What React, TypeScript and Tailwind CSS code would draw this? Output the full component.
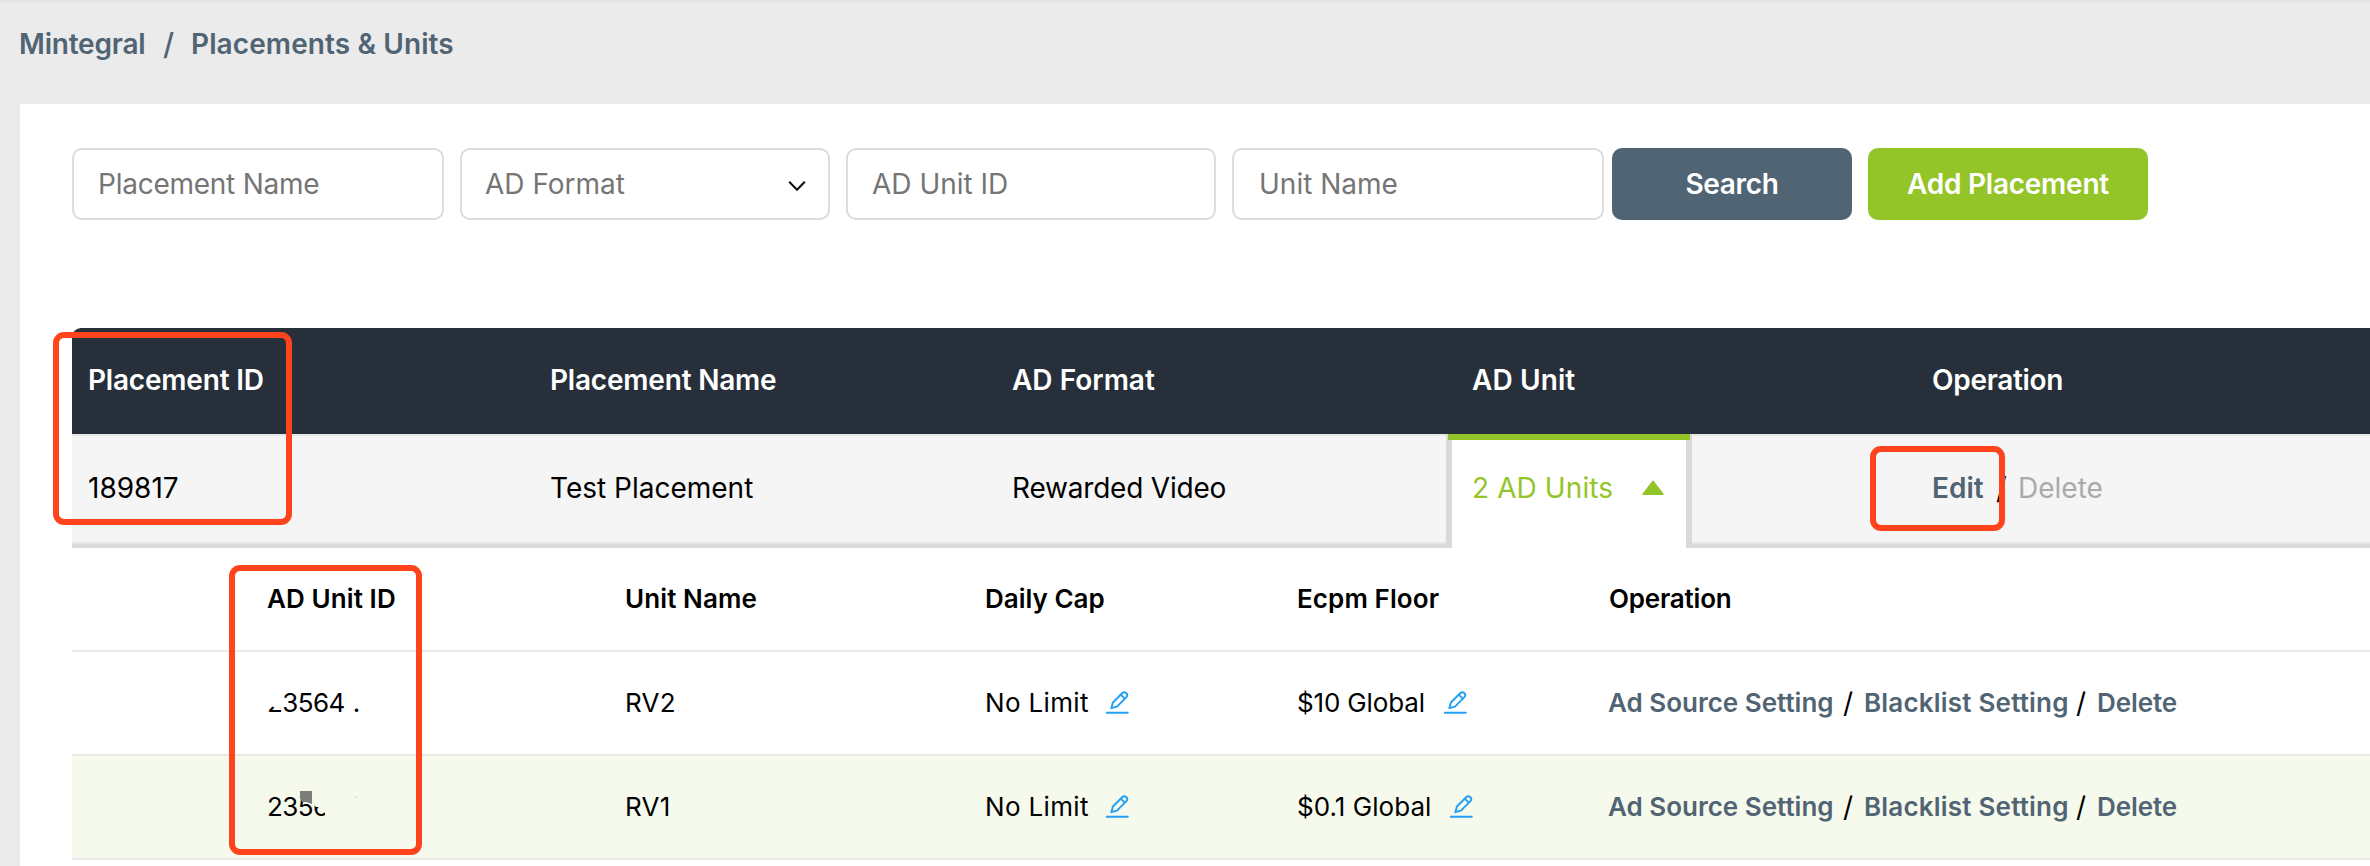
import type { ReactNode } from 'react';

function Field({ children, className }: { children: ReactNode; className: string }) {
  return (
    <div className={`flex h-[72px] shrink-0 items-center justify-between rounded-[10px] border-2 border-[#dcdcdc] bg-white text-[#757575] ${className}`}>
      {children}
    </div>
  );
}

function Pencil() {
  return (
    <svg className="h-[24px] w-[24px] shrink-0" viewBox="0 0 24 24" fill="none" stroke="#22a0f5" strokeWidth="1.9" strokeLinejoin="round" strokeLinecap="round">
      <path d="M5.3 17.2 L6.9 11.5 L16.4 2 C18.9 -.3 22.7 3.1 20.6 5.8 L11 15.6 Z" />
      <path d="M14.8 3.8 L18.9 7.6" />
      <path d="M.7 21.8 H21.7" strokeWidth="2" />
    </svg>
  );
}

function Operations() {
  return (
    <div className="flex items-center text-[#516474]">
      <span className="w-[235px] font-semibold">Ad Source Setting</span>
      <span className="w-[21px] text-[28px] text-black">/</span>
      <span className="w-[212px] font-semibold tracking-[0.2px]">Blacklist Setting</span>
      <span className="w-[21px] text-[28px] text-black">/</span>
      <span className="font-semibold -tracking-[0.1px]">Delete</span>
    </div>
  );
}

function UnitRow({ id, name, floor, className }: { id: ReactNode; name: string; floor: ReactNode; className: string }) {
  return (
    <div className={`grid h-[104px] shrink-0 grid-cols-[358px_360px_312px_311px_1fr] items-center border-b-2 border-[#e8e8e8] pl-[195px] text-[26px] ${className}`}>
      <div>{id}</div>
      <div className="tracking-[0.2px]">{name}</div>
      <div className="flex items-center gap-[17px]">
        <span className="tracking-[0.35px]">No Limit</span>
        <Pencil />
      </div>
      <div className="flex items-center gap-[19px]">{floor}<Pencil /></div>
      <Operations />
    </div>
  );
}

export default function App() {
  return (
    <div className="relative flex h-[866px] w-full flex-col overflow-hidden bg-[#ebebeb] font-[Inter,'Liberation_Sans',sans-serif] text-[28px] leading-9 whitespace-nowrap text-black">
      <div className="h-[5px] shrink-0 bg-linear-to-b from-[#e2e2e2] to-[#ebebeb]" />
      <nav className="flex h-[99px] shrink-0 pt-[21px] pl-[19px] font-semibold text-[#516474]">
        <span className="w-[144px] -tracking-[0.2px]">Mintegral</span>
        <span className="w-[28px] text-[30px] font-medium">/</span>
        <span className="tracking-[0.1px]">Placements &amp; Units</span>
      </nav>

      <main className="ml-5 flex grow flex-col bg-white pt-11 pl-[52px]">
        <div className="flex h-[72px] shrink-0">
          <Field className="mr-4 w-[372px] pl-6 -tracking-[0.25px]">Placement Name</Field>
          <Field className="mr-4 w-[370px] pr-[22px] pl-[23px]">
            <span>AD Format</span>
            <svg className="mt-1 h-3 w-[18px]" viewBox="0 0 18 12" fill="none" stroke="#111" strokeWidth="2">
              <path d="M1.2 1.8 L9 9.8 L16.8 1.8" />
            </svg>
          </Field>
          <Field className="mr-4 w-[370px] pl-6">AD Unit ID</Field>
          <Field className="mr-2 w-[372px] pl-[25px]">Unit Name</Field>
          <button className="mr-4 w-[240px] rounded-[10px] bg-[#516474] font-semibold -tracking-[0.35px] text-white">Search</button>
          <button className="w-[280px] rounded-[10px] bg-[#94c528] font-semibold -tracking-[0.25px] text-white">Add Placement</button>
        </div>

        <section className="mt-[108px] flex flex-col">
          <div className="grid h-[106px] grid-cols-[462px_462px_460px_460px_1fr] items-center rounded-tl-[9px] bg-[#27303a] pb-[2px] pl-4 font-semibold text-white">
            <div className="-tracking-[0.2px]">Placement ID</div>
            <div className="-tracking-[0.2px]">Placement Name</div>
            <div>AD Format</div>
            <div className="tracking-[0.1px]">AD Unit</div>
            <div className="-tracking-[0.3px]">Operation</div>
          </div>
          <div className="relative h-[114px] border-t-2 border-b-4 border-t-[#e8e8e8] border-b-[#d9d9d9] bg-[#f5f5f5]">
            <div className="grid h-[108px] grid-cols-[462px_462px_460px_460px_1fr] items-center border-b-2 border-[#e6e6e6] pb-[2px] pl-4">
              <div>189817</div>
              <div>Test Placement</div>
              <div className="-tracking-[0.2px]">Rewarded Video</div>
              <div />
              <div className="flex items-center">
                <span className="w-[64px] font-semibold text-[#516474]">Edit</span>
                <span className="w-[22px] text-[30px]">/</span>
                <span className="text-[#aaa]">Delete</span>
              </div>
            </div>
            <div className="absolute -top-[2px] left-[1374px] flex h-[114px] w-[246px] items-center border-x-[6px] border-[#d9d9d9] bg-white pb-[6px] pl-5 text-[#94c528]">
              <div className="absolute top-0 -left-1 h-[6px] w-[242px] bg-[#94c528]" />
              <span className="w-[169px] tracking-[0.1px]">2 AD Units</span>
              <svg className="h-4 w-6" viewBox="0 0 24 16" fill="#94c528" stroke="#94c528" strokeWidth="1.5" strokeLinejoin="round">
                <path d="M12 1.2 L22 14.2 H2 Z" />
              </svg>
            </div>
          </div>

          <div className="grid h-[104px] grid-cols-[358px_360px_312px_312px_1fr] items-center border-b-2 border-[#e8e8e8] pl-[195px] text-[26px] font-semibold">
            <div className="tracking-[0.1px]">AD Unit ID</div>
            <div className="tracking-[0.1px]">Unit Name</div>
            <div>Daily Cap</div>
            <div className="tracking-[0.1px]">Ecpm Floor</div>
            <div className="-tracking-[0.2px]">Operation</div>
          </div>
          <UnitRow
            className="bg-white"
            name="RV2"
            floor={<span className="-tracking-[0.15px]">$10 Global</span>}
            id={
              <div className="relative -tracking-[0.6px]">
                23564<span className="ml-[8px]">.</span>
                <svg className="absolute top-[6px] left-0 h-[17px] w-[15px]" viewBox="0 0 15 17" fill="#fff">
                  <path d="M0 0 H15 V17 H8 L5 15 H0 Z" />
                </svg>
              </div>
            }
          />
          <UnitRow
            className="bg-[#f6faec]"
            name="RV1"
            floor={<span className="tracking-[0.05px]">$0.1 Global</span>}
            id={
              <div className="relative -tracking-[0.6px]">
                2356
                <svg className="absolute top-0 left-[32px] h-8 w-[64px]" viewBox="0 0 64 32">
                  <path d="M13 4 H40 V30 H26 V24 L20 18 H17 L13 14 Z" fill="#f6faec" />
                  <path d="M1 2 H13 V15 L7 13 H3 L1 9 Z" fill="#7c7d78" />
                  <path d="M55 8.2 H58" stroke="#dcdfd4" />
                </svg>
              </div>
            }
          />
        </section>
      </main>

      <div className="absolute top-[332px] left-[53px] h-[193px] w-[239px] rounded-[11px] border-[6px] border-[#ff431d]" />
      <div className="absolute top-[565px] left-[229px] h-[290px] w-[193px] rounded-[11px] border-[6px] border-[#ff431d]" />
      <div className="absolute top-[446px] left-[1870px] h-[85px] w-[135px] rounded-[11px] border-[6px] border-[#ff431d]" />
    </div>
  );
}
